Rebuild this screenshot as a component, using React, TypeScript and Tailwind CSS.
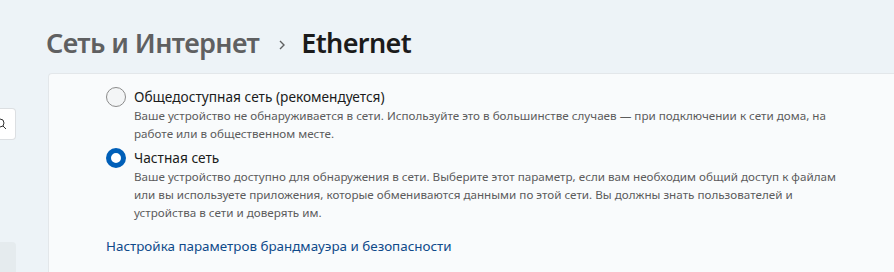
import React, { useState } from "react";

const font = { fontFamily: '"Noto Sans", "Open Sans", sans-serif' };

interface OptionProps {
  title: string;
  lines: string[];
  checked: boolean;
  onSelect: () => void;
}

function RadioOption({ title, lines, checked, onSelect }: OptionProps) {
  return (
    <div className="flex items-start gap-[8px] cursor-pointer" onClick={onSelect}>
      <div
        className={`w-[20px] h-[20px] rounded-full shrink-0 ${
          checked ? "border-[5px] border-[#005fb8] bg-white" : "border border-[#8b8b8b] bg-[#f3f5f6]"
        }`}
      />
      <div className="flex flex-col">
        <div className="text-[13.7px] leading-[20px] text-[#1b1b1b]">{title}</div>
        <div className="text-[11.66px] leading-[18px] text-[#5c5c5c]">
          {lines.map((l, i) => (
            <div key={i} className="whitespace-nowrap">
              {l}
            </div>
          ))}
        </div>
      </div>
    </div>
  );
}

export default function App() {
  const [selected, setSelected] = useState<"public" | "private">("private");

  return (
    <div className="w-[894px] h-[272px] overflow-hidden bg-[#edf3f7] relative" style={font}>
      <div className="flex items-center pl-[46px] pt-[24px] h-[73px] pb-[10px]">
        <span className="text-[27px] font-semibold text-[#5f6061] tracking-[-0.6px]">Сеть и Интернет</span>
        <svg className="ml-[19px] mr-[15px] mt-[2px]" width="8" height="12" viewBox="0 0 8 12">
          <path d="M2 2 L6 6 L2 10" fill="none" stroke="#5f6061" strokeWidth="1.4" />
        </svg>
        <span className="text-[27px] font-semibold text-[#1b1b1b] tracking-[-0.6px]">Ethernet</span>
      </div>

      <div className="flex">
        {/* left nav remnants */}
        <div className="w-[48px] shrink-0 flex flex-col">
          <div className="mt-[35px] w-[16px] h-[32px] bg-white border border-l-0 border-[#dcdfe2] rounded-r-[4px] flex items-center overflow-hidden">
            <svg width="10" height="12" viewBox="0 0 10 12">
              <circle cx="0" cy="5" r="4" fill="none" stroke="#333" strokeWidth="1" />
              <path d="M3 8 L6 11" stroke="#333" strokeWidth="1" />
            </svg>
          </div>
          <div className="mt-[102px] w-[16px] h-[40px] bg-[#e5ebee] rounded-r-[4px]" />
        </div>

        <div className="flex-1 h-[199px] bg-[#f9fbfc] border-l border-t border-[#e3e7ea] rounded-tl-[4px] pl-[57px] pt-[13px]">
          <div className="flex flex-col gap-[5px]">
            <RadioOption
              title="Общедоступная сеть (рекомендуется)"
              lines={[
                "Ваше устройство не обнаруживается в сети. Используйте это в большинстве случаев — при подключении к сети дома, на",
                "работе или в общественном месте.",
              ]}
              checked={selected === "public"}
              onSelect={() => setSelected("public")}
            />
            <RadioOption
              title="Частная сеть"
              lines={[
                "Ваше устройство доступно для обнаружения в сети. Выберите этот параметр, если вам необходим общий доступ к файлам",
                "или вы используете приложения, которые обмениваются данными по этой сети. Вы должны знать пользователей и",
                "устройства в сети и доверять им.",
              ]}
              checked={selected === "private"}
              onSelect={() => setSelected("private")}
            />
          </div>
          <a href="#" className="block mt-[14px] text-[13.4px] leading-[20px] text-[#0f4a8a]">
            Настройка параметров брандмауэра и безопасности
          </a>
        </div>
      </div>
    </div>
  );
}
